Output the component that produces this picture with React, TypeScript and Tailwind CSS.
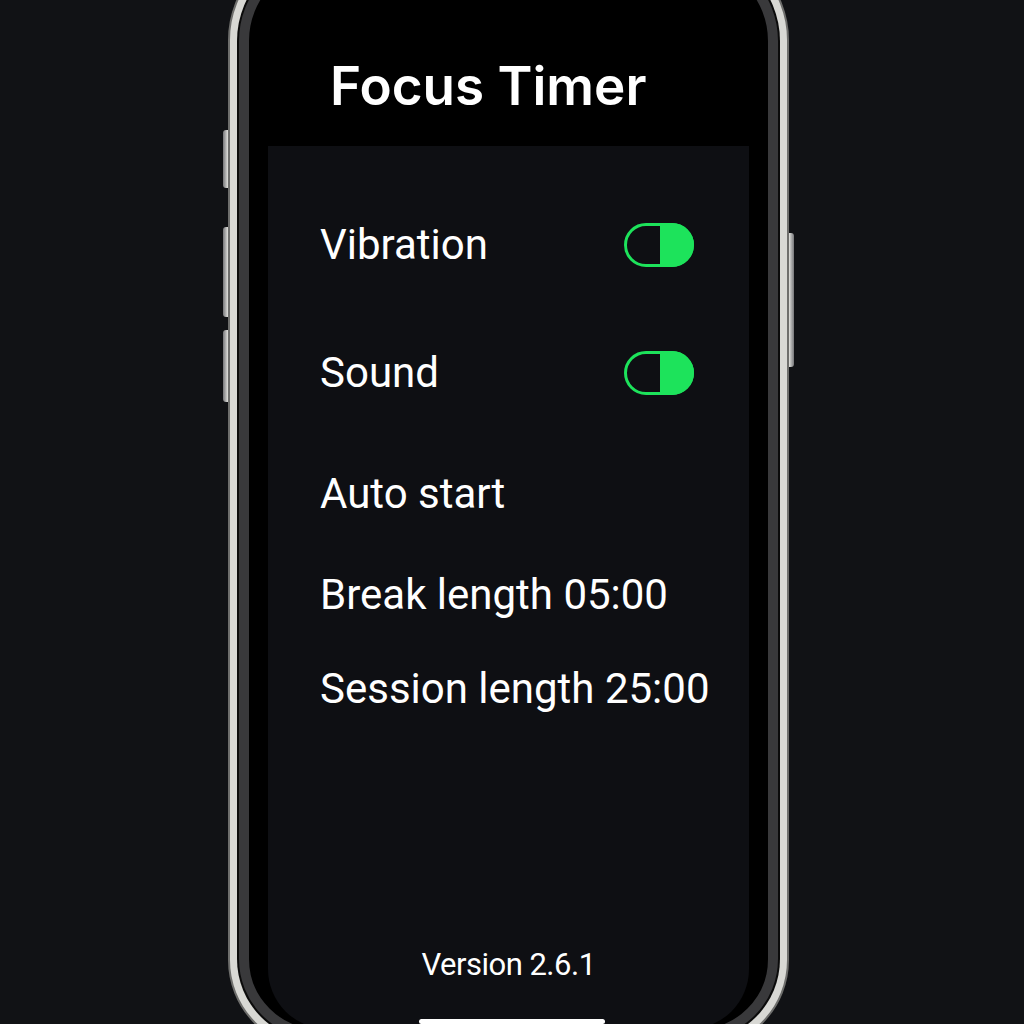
import React from "react";

// Settings row data
type Row = { label: string; toggle?: boolean; mt: string };

const rows: Row[] = [
  { label: "Vibration", toggle: true, mt: "mt-[75px]" },
  { label: "Sound", toggle: true, mt: "mt-[80px]" },
  { label: "Auto start", mt: "mt-[73px]" },
  { label: "Break length 05:00", mt: "mt-[53px]" },
  { label: "Session length 25:00", mt: "mt-[46px]" },
];

function HalfToggle() {
  return (
    <svg width="70" height="44" viewBox="0 0 70 44" fill="none">
      <rect x="1.5" y="1.5" width="67" height="41" rx="20.5" stroke="#1de35b" strokeWidth="3" />
      <path d="M36 0 H48 A22 22 0 0 1 48 44 H36 Z" fill="#1de35b" />
    </svg>
  );
}

export default function App() {
  return (
    <div
      className="h-screen w-full overflow-hidden bg-[#111215]"
      style={{ fontFamily: "Roboto, 'Liberation Sans', sans-serif" }}
    >
      {/* Phone with side buttons */}
      <div className="ml-[223px] mt-[-60px] flex items-start">
        {/* left buttons */}
        <div className="mt-[190px] flex w-[5px] flex-col gap-[39px]">
          <div className="h-[58px] rounded-l-[3px] bg-gradient-to-r from-[#77777a] to-[#e2e2de]" />
          <div className="-mt-[0px] h-[90px] rounded-l-[3px] bg-gradient-to-r from-[#77777a] to-[#e2e2de]" />
          <div className="-mt-[26px] h-[72px] rounded-l-[3px] bg-gradient-to-r from-[#77777a] to-[#e2e2de]" />
        </div>

        <div className="h-[1110px] w-[561px] rounded-t-[100px] rounded-b-[90px] border-[2px] border-[#6e6e6c] bg-[#d8d8d4] p-[7px]">
          <div className="h-full w-full rounded-t-[92px] rounded-b-[82px] bg-[#0b0b0b] p-[2px]">
            <div className="flex h-full w-full flex-col overflow-hidden rounded-t-[90px] rounded-b-[80px] border-[10px] border-[#39393b] bg-black">
              {/* Header */}
              <div className="h-[185px] shrink-0 pl-[81px] pt-[100px]">
                <h1
                  className="text-[53px] font-semibold leading-[50px] text-white"
                  style={{ fontFamily: "Inter, 'Noto Sans', sans-serif" }}
                >
                  Focus Timer
                </h1>
              </div>

              {/* Settings panel */}
              <div className="mx-[19px] flex flex-1 flex-col rounded-b-[60px] bg-[#0e0f13]">
                <div className="flex flex-col pl-[52px] pr-[55px]">
                  {rows.map((row) => (
                    <div key={row.label} className={`${row.mt} flex h-[48px] items-center justify-between`}>
                      <span className="whitespace-nowrap text-[42px] leading-none text-white">{row.label}</span>
                      {row.toggle && <HalfToggle />}
                    </div>
                  ))}
                </div>
                <div className="mt-auto text-center text-[31px] tracking-[-0.5px] text-white">
                  Version 2.6.1
                </div>
                {/* Home indicator */}
                <div className="mx-auto mt-[31px] mb-[5px] h-[5px] w-[186px] translate-x-[3px] rounded-full bg-white" />
              </div>
            </div>
          </div>
        </div>

        {/* right button */}
        <div className="mt-[293px] h-[134px] w-[5px] rounded-r-[3px] bg-gradient-to-l from-[#77777a] to-[#e2e2de]" />
      </div>
    </div>
  );
}
